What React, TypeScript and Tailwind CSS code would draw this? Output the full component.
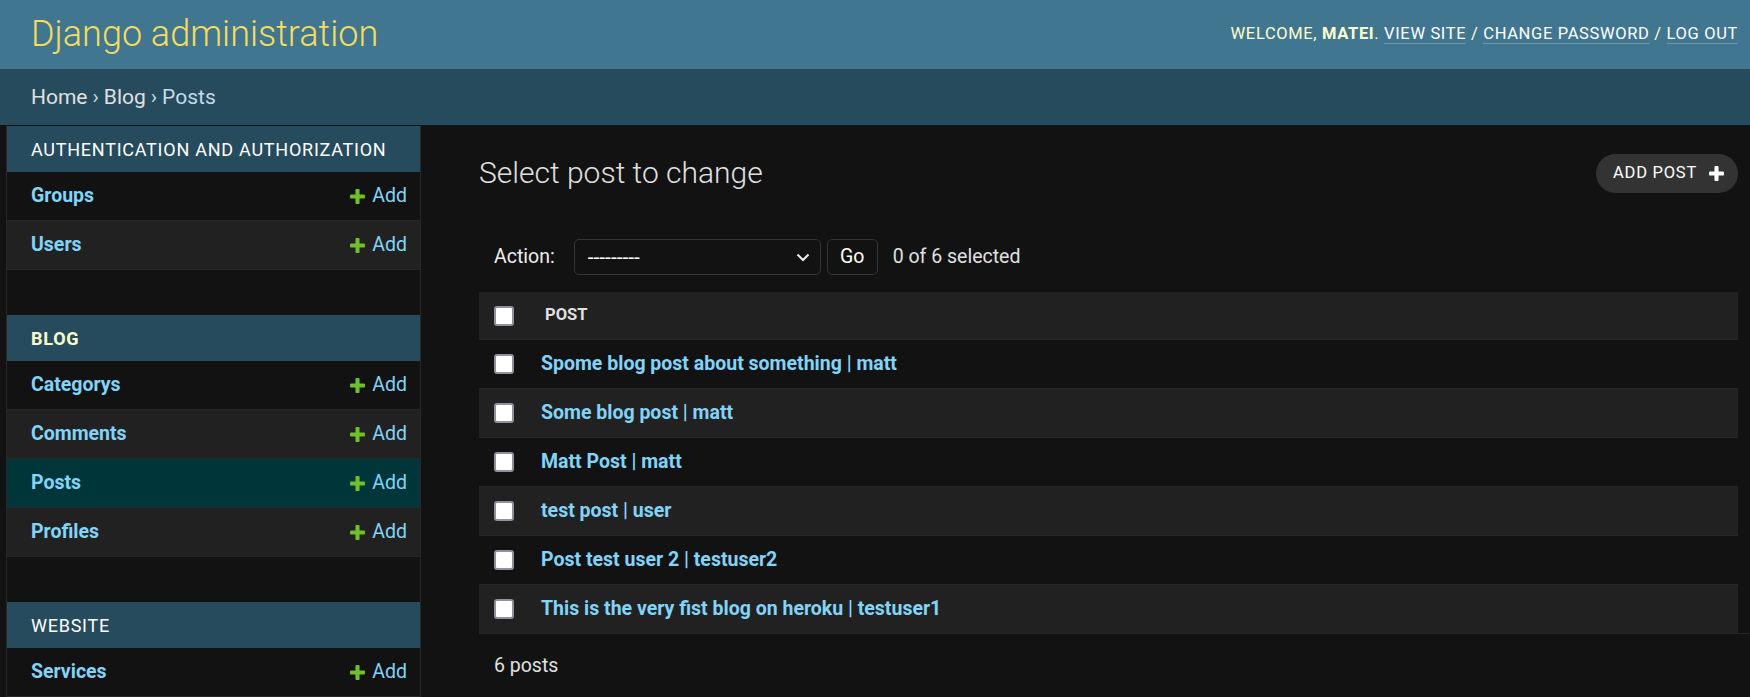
import React from 'react'

const PLUS =
  'M1600 796v192q0 40-28 68t-68 28h-416v416q0 40-28 68t-68 28h-192q-40 0-68-28t-28-68v-416h-416q-40 0-68-28t-28-68v-192q0-40 28-68t68-28h416v-416q0-40 28-68t68-28h192q40 0 68 28t28 68v416h416q40 0 68 28t28 68z'

function PlusIcon({ color }: { color: string }) {
  return (
    <svg width="19" height="19" viewBox="0 0 1792 1792" className="shrink-0">
      <path d={PLUS} fill={color} />
    </svg>
  )
}

function Checkbox() {
  return <span className="block w-[20px] h-[20px] shrink-0 rounded-[3px] border-2 border-[#8f8f9d] bg-white" />
}

type Row = { name: string; selected?: boolean }

function Module({ title, current, rows }: { title: string; current?: boolean; rows: Row[] }) {
  return (
    <div className="mb-[45px]">
      <div
        className={`h-[46px] flex items-center pl-[24px] bg-[#264b5d] text-[18px] tracking-[0.75px] uppercase ${
          current ? 'font-bold text-[#ffffcc]' : 'text-white'
        }`}
      >
        {title}
      </div>
      {rows.map((r, i) => (
        <div
          key={r.name}
          className={`h-[49px] flex items-center justify-between pl-[24px] pr-[13px] border-b border-[#272727] ${
            r.selected ? 'bg-[#00363a]' : i % 2 ? 'bg-[#212121]' : 'bg-[#121212]'
          }`}
        >
          <span className="font-bold text-[19.5px] text-[#81d4fa]">{r.name}</span>
          <span className="flex items-center gap-[5px] text-[19.5px] text-[#81d4fa]">
            <PlusIcon color="#70bf2b" />
            Add
          </span>
        </div>
      ))}
    </div>
  )
}

const posts = [
  'Spome blog post about something | matt',
  'Some blog post | matt',
  'Matt Post | matt',
  'test post | user',
  'Post test user 2 | testuser2',
  'This is the very fist blog on heroku | testuser1',
]

export default function App() {
  return (
    <div className="min-h-screen bg-[#121212] text-[#eeeeee] font-[Roboto,sans-serif] overflow-hidden">
      {/* header */}
      <header className="h-[69px] bg-[#417690] flex items-center justify-between pl-[31px] pr-[12px]">
        <h1 className="text-[36px] font-light text-[#f5dd5d] leading-[42px] -mt-[1px]">Django administration</h1>
        <div className="text-[16.5px] tracking-[0.65px] uppercase text-[#ffffcc]">
          Welcome, <strong className="font-bold">Matei</strong>.{' '}
          <a className="text-white border-b border-white/25">View site</a> /{' '}
          <a className="text-white border-b border-white/25">Change password</a> /{' '}
          <a className="text-white border-b border-white/25">Log out</a>
        </div>
      </header>

      {/* breadcrumbs */}
      <div className="h-[56px] bg-[#264b5d] flex items-center pl-[31px] pt-[1px] text-[21px] text-[#c4dce8]">
        <a className="text-[#e0e0e0]">Home</a>
        <span className="mx-[5px]">›</span>
        <a className="text-[#e0e0e0]">Blog</a>
        <span className="mx-[5px]">›</span>
        <span>Posts</span>
      </div>

      <div className="flex">
        <div className="w-[7px] shrink-0 border-r border-[#272727]" />

        {/* sidebar */}
        <nav className="w-[414px] shrink-0 pt-[1px] border-r border-[#272727]">
          <Module title="Authentication and Authorization" rows={[{ name: 'Groups' }, { name: 'Users' }]} />
          <Module
            title="Blog"
            current
            rows={[{ name: 'Categorys' }, { name: 'Comments' }, { name: 'Posts', selected: true }, { name: 'Profiles' }]}
          />
          <Module title="Website" rows={[{ name: 'Services' }]} />
        </nav>

        {/* content */}
        <main className="flex-1 pl-[58px] pr-[12px] pt-[29px]">
          <div className="flex items-end justify-between">
            <h2 className="text-[30px] font-light leading-[36px] text-[#e0e0e0]">Select post to change</h2>
            <a className="h-[39px] -mb-[2px] flex items-center gap-[10px] pl-[17px] pr-[12px] rounded-full bg-[#333333] text-[16.5px] tracking-[0.75px] uppercase text-white">
              Add post
              <PlusIcon color="#ffffff" />
            </a>
          </div>

          <div className="mt-[30px] pt-[18px] pb-[17px] pl-[15px] flex items-center text-[19.5px] text-[#eeeeee]">
            <span>Action:</span>
            <div className="ml-[19px] w-[247px] h-[36px] flex items-center justify-between pl-[13px] pr-[10px] border border-[#353535] rounded-[5px] bg-[#121212]">
              <span className="text-[21px] leading-none text-white">---------</span>
              <svg width="14" height="9" viewBox="0 0 14 9">
                <polyline points="1.5,1.5 7,7 12.5,1.5" fill="none" stroke="#eeeeee" strokeWidth="2" />
              </svg>
            </div>
            <button className="ml-[6px] h-[36px] w-[51px] border border-[#353535] rounded-[5px] bg-[#121212] text-[19.5px] text-white">
              Go
            </button>
            <span className="ml-[15px] text-[#e0e0e0]">0 of 6 selected</span>
          </div>

          <div className="h-[47px] bg-[#212121] flex items-center pl-[15px]">
            <Checkbox />
            <span className="ml-[31px] text-[16.5px] font-bold uppercase text-[#e0e0e0]">Post</span>
          </div>
          {posts.map((p, i) => (
            <div
              key={p}
              className={`h-[49px] flex items-center pl-[15px] border-t border-[#272727] ${
                i % 2 ? 'bg-[#212121]' : 'bg-[#121212]'
              }`}
            >
              <Checkbox />
              <span className="ml-[27px] text-[19.5px] font-bold text-[#81d4fa]">{p}</span>
            </div>
          ))}
          <div className="-mr-[12px] h-[65px] flex items-center pl-[15px] border-t border-b border-[#272727] text-[19.5px] text-[#e0e0e0]">
            6 posts
          </div>
        </main>
      </div>
    </div>
  )
}
